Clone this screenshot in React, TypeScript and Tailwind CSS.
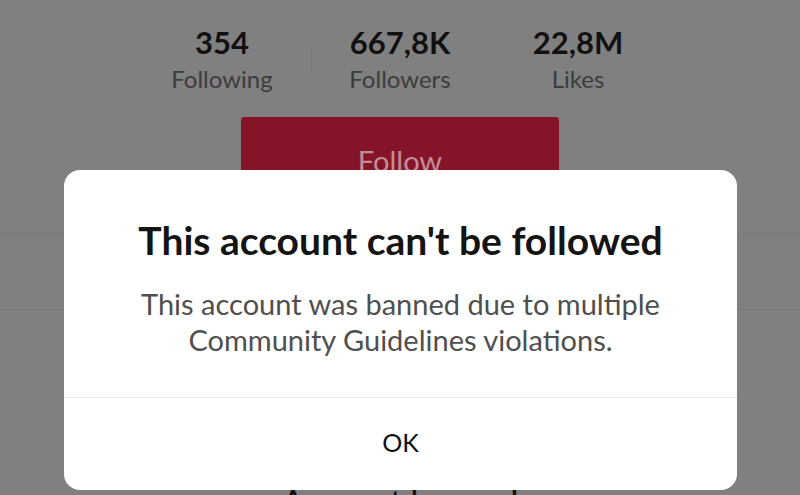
export default function App() {
  const stats = [
    { value: "354", label: "Following" },
    { value: "667,8K", label: "Followers" },
    { value: "22,8M", label: "Likes" },
  ];

  return (
    <div className="relative h-[495px] w-[800px] overflow-hidden bg-[#808080] font-['Lato',sans-serif]">
      {/* Dimmed profile behind the dialog */}
      <div className="flex flex-col items-center">
        <div className="mt-[22px] flex items-start">
          {stats.map((s, i) => (
            <div key={s.label} className="flex items-start">
              {i === 1 && <div className="mt-[26px] h-[24px] w-px bg-[#767676]" />}
              {i === 2 && <div className="w-px" />}
              <div className="flex w-[177px] flex-col items-center">
                <span className="text-[31px] font-bold leading-[40px] text-[#111]">{s.value}</span>
                <span className="mt-[2px] text-[24px] leading-[30px] text-[#3c3c3c]">{s.label}</span>
              </div>
            </div>
          ))}
        </div>
        <button className="mt-[23px] h-[64px] w-[318px] self-center rounded-[3px] bg-[#861429] pt-[23px] text-[29px] leading-[36px] text-[#c38d97]">
          <span className="block">Follow</span>
        </button>
        <div className="mt-[52px] h-px w-full bg-[#787878]" />
        <div className="mt-[75px] h-px w-full bg-[#787878]" />
        <div className="mt-[171px] text-[33px] font-medium leading-[40px] text-[#111]">Account banned</div>
      </div>

      {/* Dialog */}
      <div className="absolute left-[64px] top-[170px] flex h-[320px] w-[673px] flex-col rounded-[16px] bg-white">
        <h2 className="mt-[46px] text-center text-[39px] font-bold leading-[48px] text-[#141414]">
          This account can't be followed
        </h2>
        <p className="mt-[22px] text-center text-[29px] leading-[36px] text-[#4f4f4f]">
          This account was banned due to multiple
          <br />
          Community Guidelines violations.
        </p>
        <div className="mt-auto h-px w-full bg-[#e6e6e6]" />
        <button className="h-[92px] w-full pb-[4px] text-[25px] leading-[30px] text-[#111]">OK</button>
      </div>
    </div>
  );
}
